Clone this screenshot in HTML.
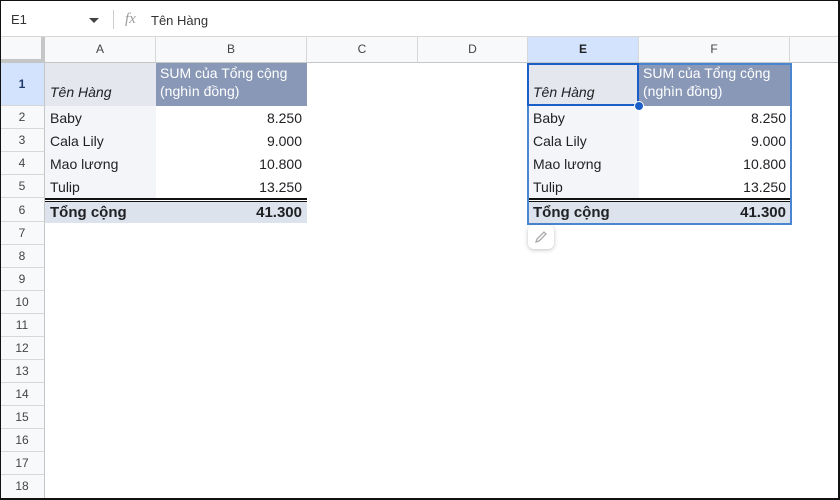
<!DOCTYPE html>
<html><head><meta charset="utf-8"><style>
*{margin:0;padding:0;box-sizing:border-box}
body{width:840px;height:500px;overflow:hidden;background:#fff;font-family:"Liberation Sans",Arial,sans-serif;position:relative}
.a{position:absolute}
.frame{position:absolute;left:0;top:0;width:840px;height:500px;border:2px solid #111;border-width:1px 2px 2px 1px;pointer-events:none;z-index:10}
.ch{position:absolute;top:37px;height:26px;background:#f8f9fa;border-right:1px solid #d7d7d7;border-bottom:1px solid #c4c7c5;font-size:12px;color:#444;text-align:center;line-height:25px}
.rh{position:absolute;left:0;width:45px;background:#f8f9fa;border-bottom:1px solid #d7d7d7;border-right:1px solid #c4c7c5;font-size:12px;color:#444;text-align:center}
.t{position:absolute;font-size:14px;color:#202124;white-space:nowrap}
.r{text-align:right}
</style></head><body>
<div class="a" style="left:0;top:0;width:840px;height:37px;background:#fff;border-bottom:1px solid #d7d7d7"></div>
<div class="t" style="left:11px;top:12px;font-size:13px;color:#333">E1</div>
<div class="a" style="left:89px;top:18px;width:0;height:0;border-left:5px solid transparent;border-right:5px solid transparent;border-top:5px solid #444"></div>
<div class="a" style="left:113px;top:10px;width:1px;height:19px;background:#ccc"></div>
<div class="t" style="left:125px;top:11px;font-size:15px;font-style:italic;color:#999;font-family:'Liberation Serif',serif">fx</div>
<div class="t" style="left:151px;top:13px;font-size:13px;color:#333">Tên Hàng</div>
<div class="a" style="left:0;top:37px;width:45px;height:26px;background:#f8f9fa;border-right:4px solid #c4c7c5;border-bottom:4px solid #c4c7c5"></div>
<div class="ch" style="left:45px;width:111px">A</div>
<div class="ch" style="left:156px;width:151px">B</div>
<div class="ch" style="left:307px;width:111px">C</div>
<div class="ch" style="left:418px;width:110px">D</div>
<div class="ch" style="left:528px;width:111px;background:#d3e3fd;color:#202124;font-weight:bold">E</div>
<div class="ch" style="left:639px;width:151px">F</div>
<div class="ch" style="left:790px;width:50px;border-right:none"></div>
<div class="rh" style="top:63px;height:43px;line-height:42px;background:#d3e3fd;color:#1f3a6b;font-weight:bold">1</div>
<div class="rh" style="top:106px;height:23px;line-height:22px">2</div>
<div class="rh" style="top:129px;height:23px;line-height:22px">3</div>
<div class="rh" style="top:152px;height:23px;line-height:22px">4</div>
<div class="rh" style="top:175px;height:23px;line-height:22px">5</div>
<div class="rh" style="top:198px;height:24px;line-height:24px">6</div>
<div class="rh" style="top:222px;height:23px;line-height:22px">7</div>
<div class="rh" style="top:245px;height:23px;line-height:22px">8</div>
<div class="rh" style="top:268px;height:23px;line-height:22px">9</div>
<div class="rh" style="top:291px;height:23px;line-height:22px">10</div>
<div class="rh" style="top:314px;height:23px;line-height:22px">11</div>
<div class="rh" style="top:337px;height:23px;line-height:22px">12</div>
<div class="rh" style="top:360px;height:23px;line-height:22px">13</div>
<div class="rh" style="top:383px;height:23px;line-height:22px">14</div>
<div class="rh" style="top:406px;height:23px;line-height:22px">15</div>
<div class="rh" style="top:429px;height:23px;line-height:22px">16</div>
<div class="rh" style="top:452px;height:23px;line-height:22px">17</div>
<div class="rh" style="top:475px;height:25px;line-height:22px">18</div>

<div class="a" style="left:45px;top:63px;width:111px;height:43px;background:#e4e8ee"></div>
<div class="a" style="left:156px;top:63px;width:151px;height:43px;background:#8898b6"></div>
<div class="a" style="left:45px;top:106px;width:111px;height:92px;background:#f3f5f8"></div>
<div class="a" style="left:45px;top:198px;width:262px;height:4px;border-top:2px solid #111;border-bottom:1px solid #111"></div>
<div class="a" style="left:45px;top:202px;width:262px;height:21px;background:#dde3ec"></div>
<div class="t" style="left:50px;top:84px;font-style:italic">Tên Hàng</div>
<div class="t" style="left:160px;top:64px;color:#fff;line-height:18px">SUM của Tổng cộng<br>(nghìn đồng)</div>
<div class="t" style="left:50px;top:110px">Baby</div>
<div class="t" style="left:50px;top:133px">Cala Lily</div>
<div class="t" style="left:50px;top:156px">Mao lương</div>
<div class="t" style="left:50px;top:179px">Tulip</div>
<div class="t r" style="left:156px;width:146px;top:110px">8.250</div>
<div class="t r" style="left:156px;width:146px;top:133px">9.000</div>
<div class="t r" style="left:156px;width:146px;top:156px">10.800</div>
<div class="t r" style="left:156px;width:146px;top:179px">13.250</div>
<div class="t" style="left:50px;top:204px;font-weight:bold;font-size:15px">Tổng cộng</div>
<div class="t r" style="left:156px;width:146px;top:204px;font-weight:bold;font-size:15px">41.300</div>

<div class="a" style="left:528px;top:63px;width:111px;height:43px;background:#e4e8ee"></div>
<div class="a" style="left:639px;top:63px;width:151px;height:43px;background:#8898b6"></div>
<div class="a" style="left:528px;top:106px;width:111px;height:92px;background:#f3f5f8"></div>
<div class="a" style="left:528px;top:198px;width:262px;height:4px;border-top:2px solid #111;border-bottom:1px solid #111"></div>
<div class="a" style="left:528px;top:202px;width:262px;height:21px;background:#dde3ec"></div>
<div class="t" style="left:533px;top:84px;font-style:italic">Tên Hàng</div>
<div class="t" style="left:643px;top:64px;color:#fff;line-height:18px">SUM của Tổng cộng<br>(nghìn đồng)</div>
<div class="t" style="left:533px;top:110px">Baby</div>
<div class="t" style="left:533px;top:133px">Cala Lily</div>
<div class="t" style="left:533px;top:156px">Mao lương</div>
<div class="t" style="left:533px;top:179px">Tulip</div>
<div class="t r" style="left:639px;width:147px;top:110px">8.250</div>
<div class="t r" style="left:639px;width:147px;top:133px">9.000</div>
<div class="t r" style="left:639px;width:147px;top:156px">10.800</div>
<div class="t r" style="left:639px;width:147px;top:179px">13.250</div>
<div class="t" style="left:533px;top:204px;font-weight:bold;font-size:15px">Tổng cộng</div>
<div class="t r" style="left:639px;width:147px;top:204px;font-weight:bold;font-size:15px">41.300</div>
<div class="a" style="left:527px;top:63px;width:265px;height:162px;border:2px solid #4a86d0"></div>
<div class="a" style="left:527px;top:63px;width:112px;height:43px;border:2px solid #1a5fc8"></div>
<div class="a" style="left:634px;top:101px;width:10px;height:10px;border-radius:50%;background:#1a5fc8;border:1px solid #fff"></div>
<div class="a" style="left:528px;top:225px;width:26px;height:24px;background:#fff;border-radius:6px;box-shadow:0 1px 4px rgba(0,0,0,.25)"></div>
<svg class="a" style="left:533px;top:229px" width="16" height="16" viewBox="0 0 16 16"><path d="M3 13 L4 10 L11 3 L13 5 L6 12 Z" fill="none" stroke="#aaa" stroke-width="1.3"/></svg>
<div class="frame"></div>
</body></html>
